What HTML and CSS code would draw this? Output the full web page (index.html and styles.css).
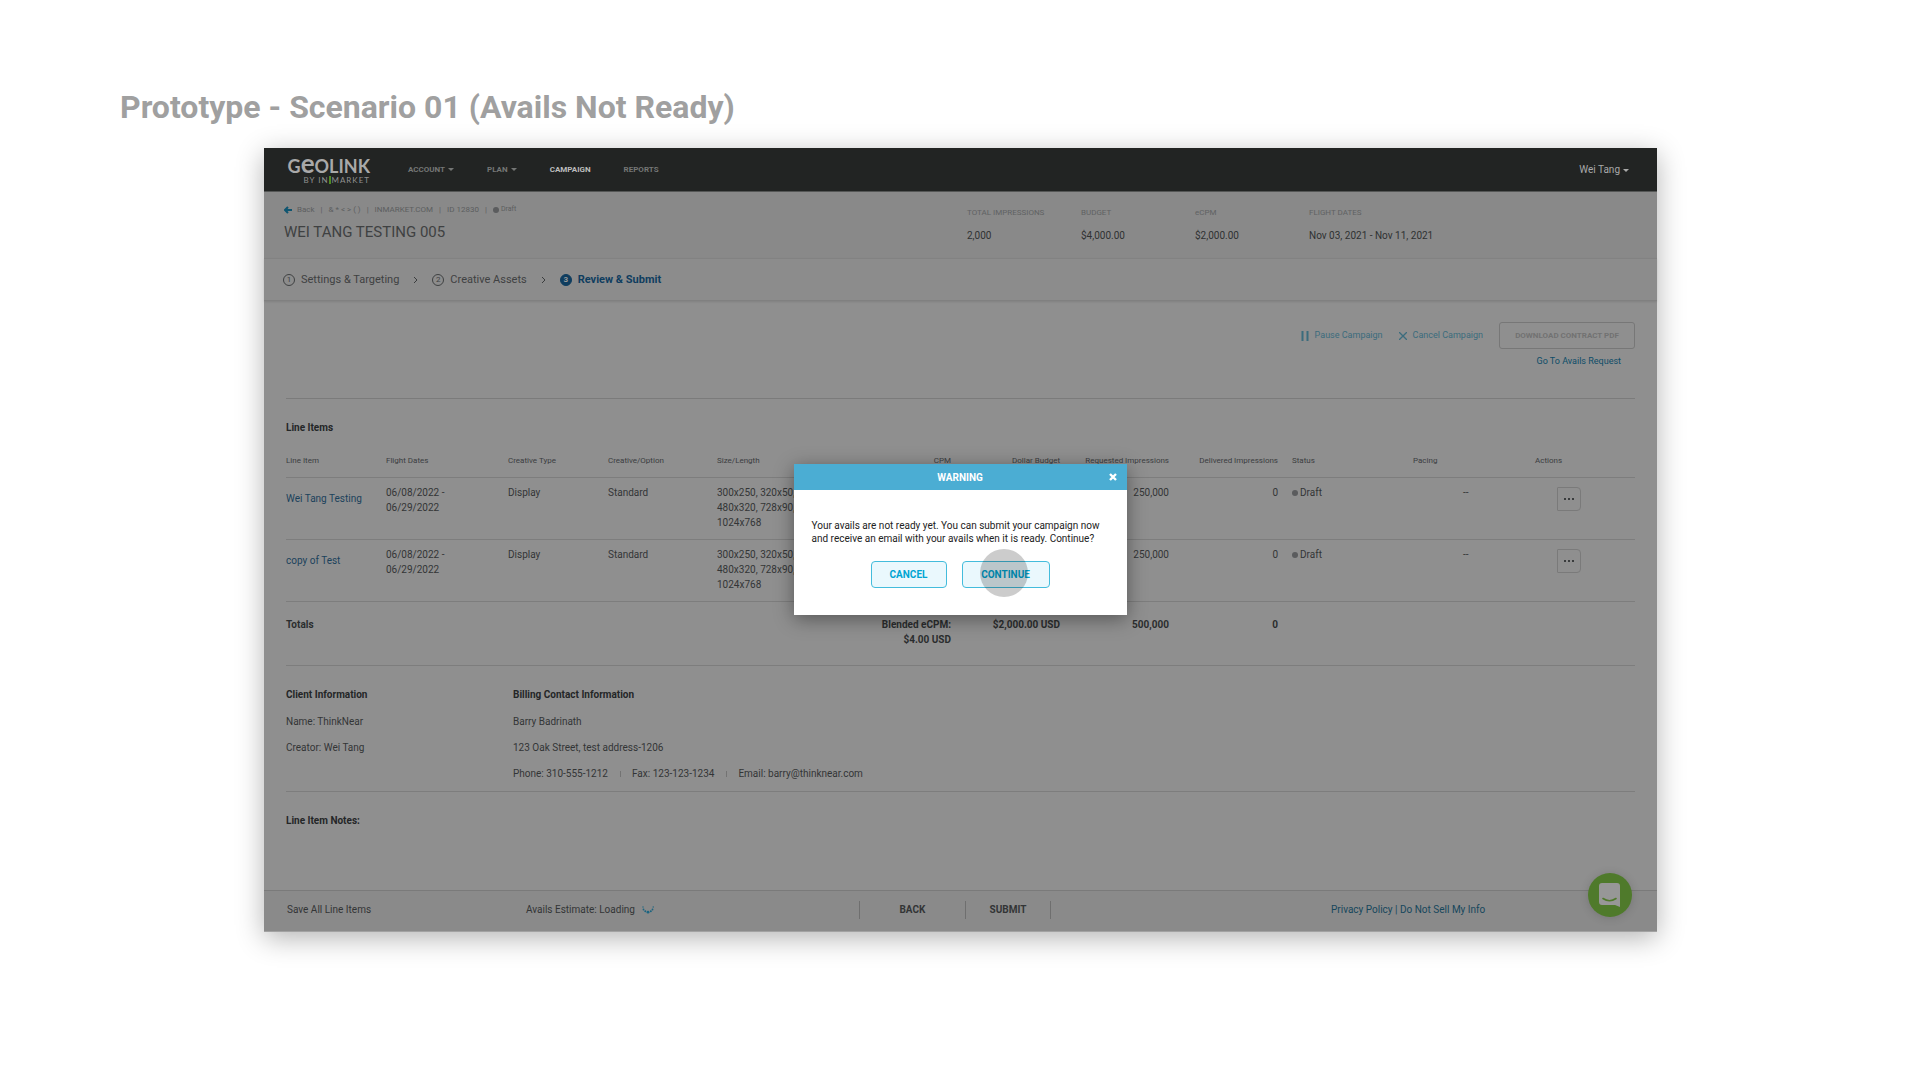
FILE: index.html
```html
<!DOCTYPE html>
<html lang="en">
<head>
<meta charset="utf-8">
<title>Prototype - Scenario 01</title>
<link rel="stylesheet" href="styles.css">
</head>
<body>
<h1 class="page-title">Prototype - Scenario 01 (Avails Not Ready)</h1>
<div class="app">
  <header class="topbar">
    <a class="logo" href="#">
      <span class="logo-name">G<span class="logo-e">e</span>OLINK</span>
      <span class="logo-by">BY IN<i class="logo-bar"></i>MARKET</span>
    </a>
    <nav class="nav">
      <a href="#">ACCOUNT<i class="caret"></i></a>
      <a href="#">PLAN<i class="caret"></i></a>
      <a href="#" class="current">CAMPAIGN</a>
      <a href="#">REPORTS</a>
    </nav>
    <a class="user" href="#">Wei Tang<i class="caret"></i></a>
  </header>

  <section class="summary">
    <div class="summary-main">
      <div class="crumbs">
        <a href="#" class="back"><svg width="8" height="8" viewBox="0 0 8 8"><path d="M4 1 1 4l3 3M1 4h7" fill="none" stroke="#0f5570" stroke-width="2"/></svg>Back</a>
        <span>|</span><span>&amp; * &lt; &gt; ( )</span><span>|</span><span>INMARKET.COM</span><span>|</span><span>ID 12830</span><span>|</span>
        <span class="crumb-status"><i class="dot"></i>Draft</span>
      </div>
      <h2>WEI TANG TESTING 005</h2>
    </div>
    <dl class="stats">
      <div><dt>TOTAL IMPRESSIONS</dt><dd>2,000</dd></div>
      <div><dt>BUDGET</dt><dd>$4,000.00</dd></div>
      <div><dt>eCPM</dt><dd>$2,000.00</dd></div>
      <div><dt>FLIGHT DATES</dt><dd>Nov 03, 2021 - Nov 11, 2021</dd></div>
    </dl>
  </section>

  <nav class="steps">
    <a href="#"><b class="num">1</b>Settings &amp; Targeting</a>
    <svg class="chev" width="5" height="8" viewBox="0 0 5 8"><path d="M1 1l3 3-3 3" fill="none" stroke="#3b3d3e"/></svg>
    <a href="#"><b class="num">2</b>Creative Assets</a>
    <svg class="chev" width="5" height="8" viewBox="0 0 5 8"><path d="M1 1l3 3-3 3" fill="none" stroke="#3b3d3e"/></svg>
    <a href="#" class="active"><b class="num">3</b>Review &amp; Submit</a>
  </nav>

  <main class="content">
    <div class="toolbar">
      <button class="tool" type="button"><svg width="8" height="10" viewBox="0 0 8 10"><path d="M1.500 0v10M6.500 0v10" stroke="#3b6c7d" stroke-width="2"/></svg>Pause Campaign</button>
      <button class="tool" type="button"><svg width="8" height="8" viewBox="0 0 8 8"><path d="M0 0l8 8M8 0 0 8" stroke="#3b6c7d" stroke-width="1.300"/></svg>Cancel Campaign</button>
      <div class="contract">
        <button class="download" type="button" disabled>DOWNLOAD CONTRACT PDF</button>
        <a href="#">Go To Avails Request</a>
      </div>
    </div>

    <h3>Line Items</h3>
    <table class="items">
      <colgroup><col class="c-name"><col class="c-dates"><col class="c-type"><col class="c-option"><col class="c-size"><col class="c-cpm"><col class="c-num"><col class="c-num"><col class="c-num"><col class="c-status"><col class="c-pacing"><col class="c-actions"></colgroup>
      <thead>
        <tr><th>Line Item</th><th>Flight Dates</th><th>Creative Type</th><th>Creative/Option</th><th>Size/Length</th><th class="n">CPM</th><th class="n">Dollar Budget</th><th class="n">Requested Impressions</th><th class="n">Delivered Impressions</th><th class="st">Status</th><th>Pacing</th><th>Actions</th></tr>
      </thead>
      <tbody>
        <tr><td class="name"><a href="#">Wei Tang Testing</a></td><td>06/08/2022 -<br>06/29/2022</td><td>Display</td><td>Standard</td><td>300x250, 320x50, 480x320, 728x90, 1024x768</td><td class="n">$4.00</td><td class="n">$1,000.00</td><td class="n">250,000</td><td class="n">0</td><td class="st"><i class="dot"></i>Draft</td><td class="pace">--</td><td class="act"><button type="button" aria-label="Actions"><i></i><i></i><i></i></button></td></tr>
        <tr><td class="name"><a href="#">copy of Test</a></td><td>06/08/2022 -<br>06/29/2022</td><td>Display</td><td>Standard</td><td>300x250, 320x50, 480x320, 728x90, 1024x768</td><td class="n">$4.00</td><td class="n">$1,000.00</td><td class="n">250,000</td><td class="n">0</td><td class="st"><i class="dot"></i>Draft</td><td class="pace">--</td><td class="act"><button type="button" aria-label="Actions"><i></i><i></i><i></i></button></td></tr>
      </tbody>
      <tfoot>
        <tr><td>Totals</td><td></td><td></td><td></td><td></td><td class="n">Blended eCPM:<br>$4.00 USD</td><td class="n">$2,000.00 USD</td><td class="n">500,000</td><td class="n">0</td><td></td><td></td><td></td></tr>
      </tfoot>
    </table>

    <div class="info">
      <div class="info-col">
        <h4>Client Information</h4>
        <p>Name: ThinkNear</p>
        <p>Creator: Wei Tang</p>
      </div>
      <div class="info-col">
        <h4>Billing Contact Information</h4>
        <p>Barry Badrinath</p>
        <p>123 Oak Street, test address-1206</p>
        <p class="contact"><span>Phone: 310-555-1212</span><span>Fax: 123-123-1234</span><span>Email: barry@thinknear.com</span></p>
      </div>
    </div>
    <h3>Line Item Notes:</h3>
  </main>

  <footer class="footer">
    <span>Save All Line Items</span>
    <span class="avails">Avails Estimate: Loading
      <svg width="12" height="8" viewBox="0 0 12 8" fill="#1b6480"><circle cx="1" cy="1" r=".7"/><circle cx="1.500" cy="3.500" r=".9"/><circle cx="3.300" cy="5.300" r="1"/><circle cx="6" cy="6.200" r="1.400"/><circle cx="8.800" cy="5.300" r="1"/><circle cx="10.500" cy="3.500" r=".9"/><circle cx="11.200" cy="1" r=".7"/></svg>
    </span>
    <div class="footer-nav"><button type="button">BACK</button><button type="button">SUBMIT</button></div>
    <span class="legal"><a href="#">Privacy Policy</a> | <a href="#">Do Not Sell My Info</a></span>
  </footer>

  <button class="chat" type="button" aria-label="Open chat">
    <svg width="22" height="24" viewBox="0 0 22 24"><path d="M3 0h15q3 0 3 3v21l-5-2H3q-3 0-3-3V3q0-3 3-3z" fill="#979797"/><path d="M4 15.500q6.500 4.500 13 0" fill="none" stroke="#4f7a2b" stroke-width="1.600" stroke-linecap="round"/></svg>
  </button>

  <div class="modal" role="dialog" aria-labelledby="modal-title">
    <div class="modal-head">
      <h2 id="modal-title">WARNING</h2>
      <button type="button" aria-label="Close"><svg width="8" height="8" viewBox="0 0 8 8"><path d="M1 1l6 6M7 1 1 7" stroke="#fff" stroke-width="2.400"/></svg></button>
    </div>
    <p>Your avails are not ready yet. You can submit your campaign now<br>and receive an email with your avails when it is ready. Continue?</p>
    <div class="modal-buttons">
      <button type="button">CANCEL</button>
      <button type="button" class="continue">CONTINUE<i class="tap"></i></button>
    </div>
  </div>
</div>
</body>
</html>
```
FILE: styles.css
```css
* { box-sizing: border-box; }
body { margin: 0; padding-bottom: 60px; background: #fff; font: 10px/15px Roboto, "Liberation Sans", sans-serif; color: #333536; }
h1, h2, h3, h4, p, dl, dd { margin: 0; }
a { color: inherit; text-decoration: none; }
button { font: inherit; color: inherit; background: none; border: 0; padding: 0; }
svg { display: block; flex: none; }

.page-title { padding: 88px 120px 22px; font-size: 32px; line-height: 38px; color: #a0a0a0; }
.app { position: relative; margin: 0 263px 0 264px; background: #8f8f8f; box-shadow: 0 6px 26px rgba(0, 0, 0, .3); }

.topbar { display: flex; align-items: center; height: 44px; padding: 0 28px 0 22px; background: #222423; border-bottom: 1px solid #555756; }
.logo { display: flex; flex-direction: column; align-items: flex-end; width: 84px; color: #a9a9a9; font-family: Lato, sans-serif; }
.logo-name { font-size: 18px; line-height: 18px; font-weight: 700; white-space: nowrap; }
.logo-e { font-size: 26px; line-height: 18px; }
.logo-by { font-size: 8px; line-height: 10px; white-space: nowrap; display: flex; align-items: center; letter-spacing: 1px; color: #909090; }
.logo-bar { width: 2px; height: 8px; background: #4f8a22; margin-right: 1px; }
.nav { display: flex; gap: 33px; margin-left: 38px; flex: 1; font-size: 8px; font-weight: 700; color: #747675; }
.nav .current { color: #bdbdbd; }
.caret { display: inline-block; margin-left: 3px; border: 3px solid transparent; border-top-color: currentColor; border-bottom: 0; vertical-align: middle; }
.user { color: #a9a9a9; }

.summary { display: flex; height: 66px; padding: 10px 20px 0; background: #898989; }
.summary-main { flex: 683; }
.crumbs { display: flex; align-items: center; gap: 6px; font-size: 8px; color: #5c5e5f; }
.back { display: flex; align-items: center; gap: 5px; }
.crumb-status { display: flex; align-items: center; gap: 2px; font-size: 7px; }
.dot { display: inline-block; width: 6px; height: 6px; border-radius: 50%; background: #5b5c5e; }
.summary h2 { margin-top: 5px; font-size: 15px; line-height: 20px; font-weight: 400; color: #3f4142; }
.stats { display: grid; grid-template-columns: 114fr 114fr 114fr 328fr; flex: 670; padding-top: 3px; }
.stats dt { font-size: 8px; color: #606263; }
.stats dd { margin-top: 8px; color: #2f3132; }

.steps { display: flex; align-items: center; gap: 14px; height: 43px; padding: 0 19px; background: #8c8c8c; border-top: 1px solid #828282; border-bottom: 1px solid #808080; box-shadow: 0 1px 2px rgba(0, 0, 0, .1); font-size: 11px; color: #3f4142; }
.steps a { display: flex; align-items: center; gap: 6px; }
.num { width: 12px; height: 12px; border: 1px solid #3f4142; border-radius: 50%; font-size: 8px; line-height: 10px; font-weight: 400; text-align: center; }
.active { color: #0f3d5f; font-weight: 700; }
.active .num { background: #0f3d5f; border-color: #0f3d5f; color: #999; font-weight: 700; }

.content { padding: 0 22px 62px; }
.toolbar { display: flex; justify-content: flex-end; height: 98px; padding-top: 21px; border-bottom: 1px solid #7b7b7b; font-size: 9px; }
.tool { display: flex; align-items: center; gap: 6px; height: 27px; margin-right: 16px; color: #3b6c7d; }
.contract { display: flex; flex-direction: column; width: 136px; }
.download { height: 27px; border: 1px solid #777; border-radius: 3px; font-size: 8px; font-weight: 700; color: #727272; white-space: nowrap; }
.contract a { padding: 5px 14px 0 0; text-align: right; color: #0d4d68; }
h3, h4 { font-size: 10px; line-height: 15px; font-weight: 700; color: #242627; }
h3 { padding-top: 21px; }

.items { width: 100%; table-layout: fixed; border-collapse: separate; border-spacing: 0; }
.c-name, .c-type, .c-actions { width: 100px; }
.c-dates, .c-pacing { width: 122px; }
.c-option, .c-num { width: 109px; }
.c-size { width: 110px; }
.c-cpm { width: 124px; }
.c-status { width: 135px; }
.items th, .items td { padding: 0; text-align: left; vertical-align: top; border-bottom: 1px solid #7d7d7d; }
.items th { padding: 18px 0 9px; font-size: 8px; font-weight: 400; color: #3b3d3f; white-space: nowrap; }
.items td { height: 62px; padding-top: 7px; }
.items .n { text-align: right; }
.items .name { padding-top: 13px; color: #1b425c; }
.items .st { padding-left: 14px; }
.items .st .dot { margin-right: 2px; }
.items .pace { padding-left: 50px; }
.items .act { padding: 9px 0 0 22px; }
.act button { display: flex; align-items: center; justify-content: center; gap: 2px; width: 24px; height: 24px; border: 1px solid #7a7a7a; border-radius: 1px 4px 4px 1px; }
.act i { width: 2px; height: 2px; background: #3a3c3d; }
.items tfoot td { height: 64px; padding-top: 15px; font-weight: 700; color: #2b2d2e; }

.info { display: grid; grid-template-columns: 227fr 1122fr; padding: 21px 0 10px; border-bottom: 1px solid #7d7d7d; }
.info-col { display: flex; flex-direction: column; gap: 11px; }
.info h4 { margin-bottom: 1px; }
.contact { display: flex; }
.contact span + span { margin-left: 12px; padding-left: 12px; background: linear-gradient(#737373, #737373) left / 1px 6px no-repeat; }

.footer { display: grid; grid-template-columns: 239fr 333fr 192fr 280fr 326fr; align-items: center; height: 42px; padding: 0 0 4px 23px; background: #8a8a8a; border-top: 1px solid #7a7a7a; box-shadow: inset 0 -1px #a2a2a2; }
.avails { display: flex; align-items: center; gap: 7px; }
.footer-nav { display: flex; height: 18px; border-right: 1px solid #6f6f6f; font-weight: 700; }
.footer-nav button { flex: 85; border-left: 1px solid #6f6f6f; }
.footer-nav button:first-child { flex: 106; }
.legal { grid-column: 5; color: #16475c; }

.chat { position: absolute; right: 25px; bottom: 15px; display: grid; place-items: center; width: 44px; height: 44px; border-radius: 50%; background: #4f7a2b; box-shadow: 0 1px 10px rgba(0, 0, 0, .15); }

.modal { position: absolute; top: 316px; left: 50%; width: 333px; margin-left: -167px; height: 151px; background: #fff; box-shadow: 0 4px 18px rgba(0, 0, 0, .4); color: #222; }
.modal-head { display: flex; align-items: center; height: 26px; padding: 0 10px 0 18px; background: #4badd3; color: #fff; }
.modal-head h2 { flex: 1; font-size: 10px; line-height: 15px; text-align: center; }
.modal p { padding: 29px 0 0 18px; line-height: 13px; white-space: nowrap; }
.modal-buttons { display: flex; justify-content: center; gap: 15px; margin-top: 16px; }
.modal-buttons button { position: relative; width: 76px; height: 27px; border: 1px solid #43bcdc; border-radius: 4px; background: #eaf8fd; color: #00a5d3; font-weight: 700; }
.modal-buttons .continue { width: 88px; }
.tap { position: absolute; left: 17px; top: -13px; width: 48px; height: 48px; border-radius: 50%; background: rgba(0, 0, 0, .2); }
```
